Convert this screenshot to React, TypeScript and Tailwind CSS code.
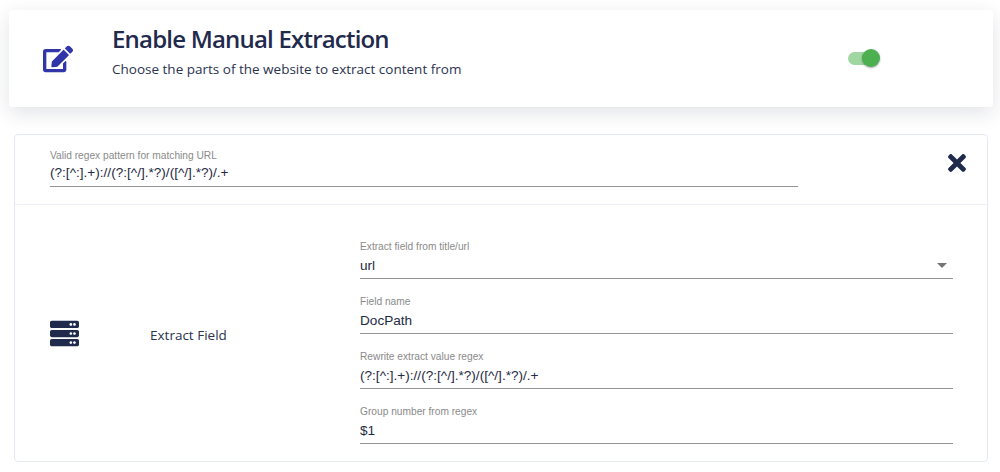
import { FaEdit, FaServer, FaTimes } from "react-icons/fa";

function Field({ label, value, select }: { label: string; value: string; select?: boolean }) {
    return (
        <div className="relative h-[55px] border-b border-[#949494] pt-[16px] font-['Liberation_Sans',sans-serif]">
            <div className="text-[10.2px] leading-[13px] text-[#8a8a8a]">{label}</div>
            <div className="mt-[3px] text-[13.6px] leading-[20px] text-[#1f2a44]">{value}</div>
            {select && (
                <div className="absolute right-[6px] top-[39px] h-0 w-0 border-x-[5px] border-t-[5px] border-x-transparent border-t-[#757575]" />
            )}
        </div>
    );
}

export default function App() {
    return (
        <div className="h-[472px] w-[1000px] overflow-hidden bg-white pt-[10px] font-['Open_Sans',sans-serif]">
            <div className="ml-[9px] flex h-[97px] w-[984px] items-start rounded-[3px] bg-white shadow-[0_6px_20px_rgba(30,40,70,0.13)]">
                <div className="ml-[34px] mt-[34px] w-[69px] text-[#3035a8]">
                    <FaEdit size={30} />
                </div>
                <div className="pt-[11px]">
                    <h1 className="text-[24px] font-semibold leading-[36px] tracking-[-0.8px] text-[#1f2a4c]">Enable Manual Extraction</h1>
                    <p className="mt-[2px] text-[13.5px] leading-[20px] text-[#2a3350]">Choose the parts of the website to extract content from</p>
                </div>
                <div className="relative ml-auto mr-[113px] mt-[38px] h-[20px] w-[32px]">
                    <div className="absolute left-0 top-[4px] h-[13px] w-[30px] rounded-full bg-[#a0d6a2]" />
                    <div className="absolute left-[14px] top-[1px] h-[18px] w-[18px] rounded-full bg-[#4caf50] shadow-[0_1px_2px_rgba(0,0,0,0.35)]" />
                </div>
            </div>

            <div className="ml-[14px] mt-[27px] h-[328px] w-[974px] rounded-[4px] border border-[#e4e9f2]">
                <div className="flex h-[70px] items-start border-b border-[#edf0f6] pl-[35px]">
                    <div className="h-[52px] w-[748px] border-b border-[#949494] pt-[14px] font-['Liberation_Sans',sans-serif]">
                        <div className="text-[10.2px] leading-[13px] text-[#8a8a8a]">Valid regex pattern for matching URL</div>
                        <div className="mt-[1px] text-[13.6px] leading-[20px] text-[#1f2a44]">{"(?:[^:].+)://(?:[^/].*?)/([^/].*?)/.+"}</div>
                    </div>
                    <div className="ml-[146px] mt-[15px] text-[#1f2a4c]">
                        <FaTimes size={26} />
                    </div>
                </div>
                <div className="flex">
                    <div className="flex w-[345px] items-center pl-[35px] pt-[3px]">
                        <FaServer size={29} className="mb-[3px] text-[#1f2a4c]" />
                        <span className="ml-[71px] text-[13.5px] text-[#2a3350]">Extract Field</span>
                    </div>
                    <div className="w-[593px] pb-[18px] pt-[19px]">
                        <Field label="Extract field from title/url" value="url" select />
                        <Field label="Field name" value="DocPath" />
                        <Field label="Rewrite extract value regex" value="(?:[^:].+)://(?:[^/].*?)/([^/].*?)/.+" />
                        <Field label="Group number from regex" value="$1" />
                    </div>
                </div>
            </div>
        </div>
    );
}
